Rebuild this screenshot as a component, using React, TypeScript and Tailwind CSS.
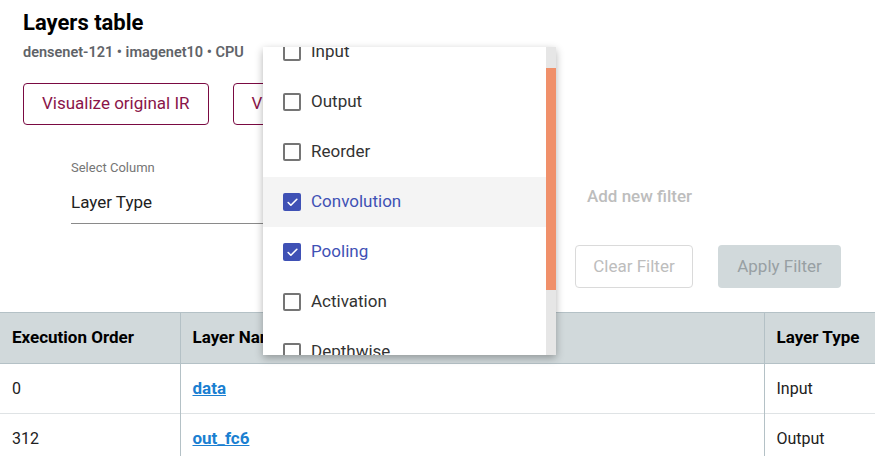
import { Check } from 'lucide-react';

const OPTIONS = [
  { label: 'Input', checked: false },
  { label: 'Output', checked: false },
  { label: 'Reorder', checked: false },
  { label: 'Convolution', checked: true, active: true },
  { label: 'Pooling', checked: true },
  { label: 'Activation', checked: false },
  { label: 'Depthwise', checked: false },
];

const ROWS = [
  { order: '0', name: 'data', type: 'Input' },
  { order: '312', name: 'out_fc6', type: 'Output' },
];

function Checkbox({ checked }: { checked: boolean }) {
  return checked ? (
    <span className="flex h-[18px] w-[18px] shrink-0 items-center justify-center rounded-[2px] bg-[#3f51b5]">
      <Check size={13} strokeWidth={3} className="text-white" />
    </span>
  ) : (
    <span className="h-[18px] w-[18px] shrink-0 rounded-[2px] border-2 border-[#757575]" />
  );
}

function TypeDropdown() {
  return (
    <div className="absolute left-[263px] top-[47px] flex h-[308px] w-[293px] overflow-hidden bg-white shadow-[0_3px_8px_rgba(0,0,0,0.3)]">
      <div className="flex-1 overflow-hidden">
        <div className="-mt-[20px]">
          {OPTIONS.map((o) => (
            <div
              key={o.label}
              className={`flex h-[50px] items-center gap-[10px] pl-[20px] text-[17px] ${o.active ? 'bg-[#f4f4f4]' : ''} ${
                o.checked ? 'text-[#3f51b5]' : 'text-[#333]'
              }`}
            >
              <Checkbox checked={o.checked} />
              {o.label}
            </div>
          ))}
        </div>
      </div>
      <div className="w-[10px] bg-[#e6e6e6] pt-[21px]">
        <div className="h-[222px] bg-[#f0906a]" />
      </div>
    </div>
  );
}

export default function App() {
  return (
    <div className="relative h-[456px] w-[875px] overflow-hidden bg-white font-['Roboto',sans-serif] text-[#212121]">
      <div className="px-[23px] pt-[9px]">
        <h1 className="text-[22px] font-bold leading-[28px] text-black">Layers table</h1>
        <div className="mt-[7px] text-[14.5px] font-semibold leading-[18px] text-[#5f6368]">
          densenet-121 • imagenet10 • CPU
        </div>
        <div className="mt-[21px] flex gap-[24px]">
          <button className="h-[42px] rounded-[4px] border border-[#7a0a42] px-[18px] text-[17px] text-[#8a1449]">
            Visualize original IR
          </button>
          <button className="h-[42px] rounded-[4px] border border-[#7a0a42] px-[18px] text-[17px] text-[#8a1449]">
            Visualize runtime graph
          </button>
        </div>
      </div>

      <div className="mt-[34px] flex pl-[71px]">
        <div className="w-[230px]">
          <div className="text-[13px] leading-[18px] text-[#757575]">Select Column</div>
          <div className="mt-[13px] border-b border-[#8a8a8a] pb-[9px] text-[17px] leading-[24px] text-[#212121]">
            Layer Type
          </div>
        </div>
        <div className="ml-[286px] mt-[25px] text-[17px] font-medium text-[#bdbdbd]">Add new filter</div>
      </div>

      <div className="mt-[21px] flex justify-end gap-[25px] pr-[34px]">
        <button className="h-[43px] w-[118px] rounded-[4px] border border-[#dadada] text-[17px] text-[#bdbdbd]">
          Clear Filter
        </button>
        <button className="h-[43px] w-[123px] rounded-[4px] bg-[#d1d9db] text-[17px] text-[#98a0a3]">
          Apply Filter
        </button>
      </div>

      <table className="mt-[24px] w-full border-collapse text-left text-[16px]">
        <thead>
          <tr className="h-[51px] border-y border-[#b4c1c6] bg-[#d1d9db] text-[17px] text-black">
            <th className="w-[180px] border-r border-[#b4c1c6] pl-[12px] font-bold">Execution Order</th>
            <th className="w-[584px] border-r border-[#b4c1c6] pl-[12px] font-bold">Layer Name</th>
            <th className="pl-[12px] font-bold">Layer Type</th>
          </tr>
        </thead>
        <tbody>
          {ROWS.map((r) => (
            <tr key={r.order} className="h-[50px] border-b border-[#dfe3e5]">
              <td className="border-r border-[#b4c1c6] pl-[12px] text-[#212121]">{r.order}</td>
              <td className="border-r border-[#b4c1c6] pl-[12px]">
                <a className="text-[17px] font-bold text-[#1a7fd1] underline">{r.name}</a>
              </td>
              <td className="pl-[12px] text-[#212121]">{r.type}</td>
            </tr>
          ))}
        </tbody>
      </table>

      <TypeDropdown />
    </div>
  );
}
